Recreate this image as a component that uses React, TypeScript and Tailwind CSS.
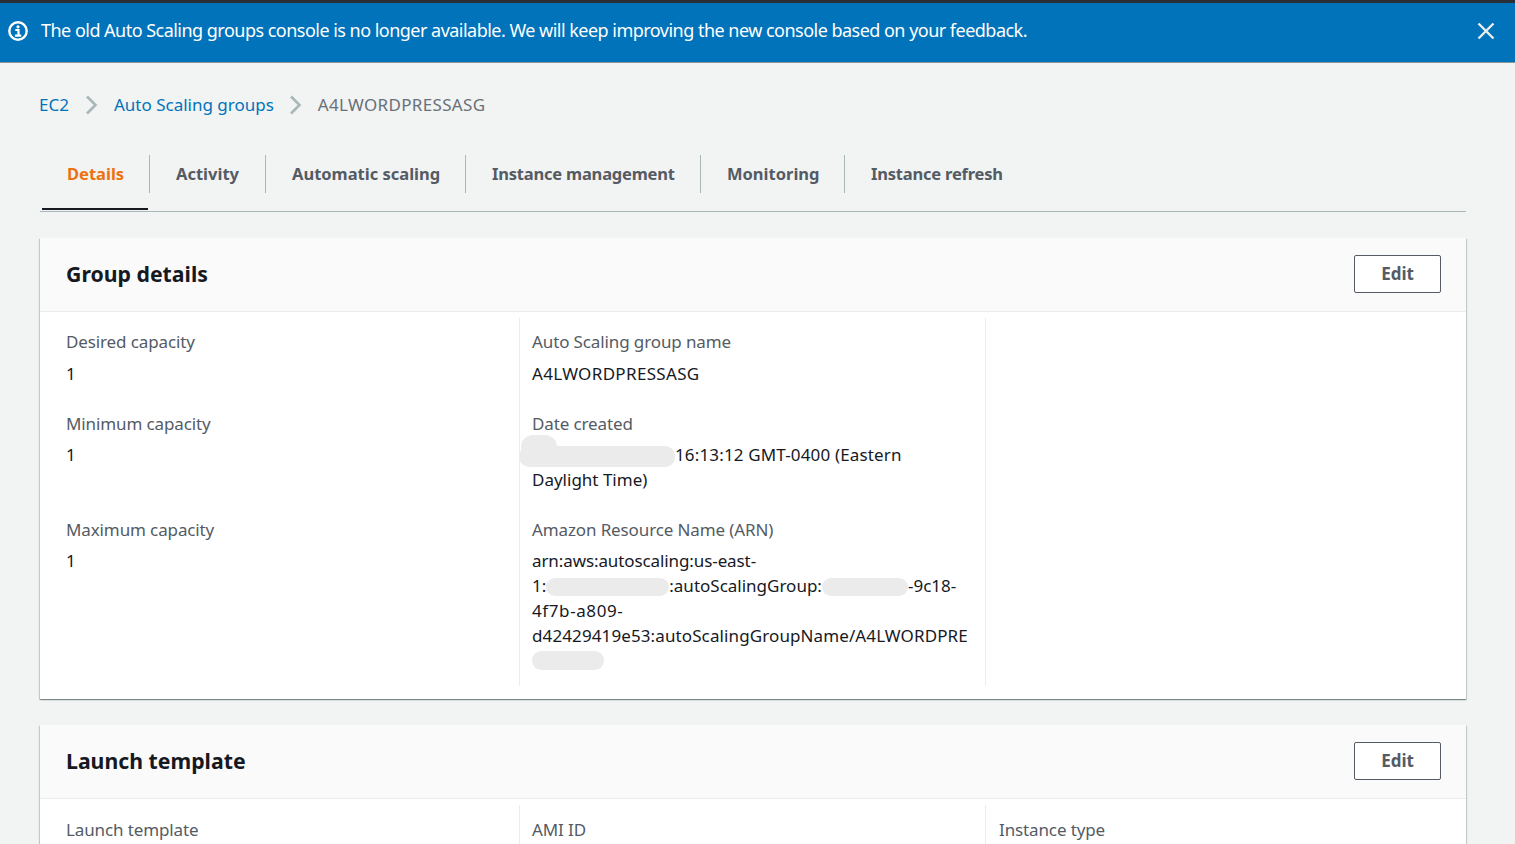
import React from 'react';

const font = { fontFamily: '"Noto Sans", sans-serif' };

const tabs = [
  { label: 'Details', cls: 'w-[108px] pl-[25px] text-[#ec7211] border-r' },
  { label: 'Activity', cls: 'w-[116px] pl-[26px] text-[#545b64] border-r' },
  { label: 'Automatic scaling', cls: 'w-[200px] pl-[26px] text-[#545b64] border-r' },
  { label: 'Instance management', cls: 'w-[235px] pl-[26px] text-[#545b64] border-r tracking-[-0.2px]' },
  { label: 'Monitoring', cls: 'w-[144px] pl-[26px] text-[#545b64] border-r' },
  { label: 'Instance refresh', cls: 'pl-[26px] text-[#545b64] tracking-[-0.2px]' },
];

// grey smudge that hides a redacted part of a value
const Blob = ({ className, children }: { className: string; children?: React.ReactNode }) => (
  <span className={`inline-block relative align-middle ${className}`}>
    <span className="absolute inset-0 rounded-full bg-[#ebebeb]" />
    {children}
  </span>
);

const Field = ({ label, children, className = '', gap = 'mt-[6px]' }: { label: string; children?: React.ReactNode; className?: string; gap?: string }) => (
  <div className={className}>
    <div className="text-[#545b64] leading-[25px] tracking-[-0.12px]">{label}</div>
    <div className={`${gap} text-[#16191f] leading-[25px]`}>{children}</div>
  </div>
);

const CardHeader = ({ title }: { title: string }) => (
  <div className="h-[74px] flex items-center justify-between pl-[26px] pr-[25px] pb-[1px] bg-[#fafafa] border-b border-[#eaeded]">
    <h2 className="text-[21.25px] font-bold text-[#16191f]">{title}</h2>
    <button className="w-[87px] h-[38px] bg-white border border-[#545b64] rounded-[2px] font-bold text-[#545b64] text-[17px]">Edit</button>
  </div>
);

const Chevron = ({ className }: { className: string }) => (
  <svg width="14" height="20" viewBox="0 0 14 20" fill="none" className={className}>
    <path d="M2 1.5l8.5 8.5L2 18.5" stroke="#aab7b8" strokeWidth="2.6" />
  </svg>
);

const cardShadow = 'shadow-[0_1px_1px_0_rgba(0,28,36,0.3),1px_1px_1px_0_rgba(0,28,36,0.15),-1px_1px_1px_0_rgba(0,28,36,0.15)]';

export default function App() {
  return (
    <div className="h-[844px] overflow-hidden bg-[#f2f3f3] text-[17px]" style={font}>
      <div className="h-[3px] bg-[#2a2e37]" />
      <div className="h-[60px] bg-[#0073bb] border-b border-[#879596] flex items-center pl-[8px] pr-[20px] pb-[4px] text-white text-[18px]">
        <svg width="20" height="20" viewBox="0 0 20 20" fill="none" className="shrink-0">
          <circle cx="10" cy="10" r="8.7" stroke="white" strokeWidth="2.4" />
          <circle cx="10" cy="5.8" r="1.6" fill="white" />
          <path d="M7.3 9h3.2v5M7 14.6h6.2" stroke="white" strokeWidth="2.2" />
        </svg>
        <span className="ml-[13px] flex-1 tracking-[-0.52px]">The old Auto Scaling groups console is no longer available. We will keep improving the new console based on your feedback.</span>
        <svg width="18" height="18" viewBox="0 0 18 18" fill="none" className="shrink-0">
          <path d="M1.5 1.5l15 15M16.5 1.5l-15 15" stroke="#eaeded" strokeWidth="2.4" />
        </svg>
      </div>

      <div className="pl-[40px] pr-[49px]">
        <div className="h-[84px] flex items-center">
          <span className="text-[#0073bb] -ml-[1px]">EC2</span>
          <Chevron className="ml-[16px] mr-[15px]" />
          <span className="text-[#0073bb]">Auto Scaling groups</span>
          <Chevron className="mx-[15px]" />
          <span className="text-[#687078] tracking-[0.33px]">A4LWORDPRESSASG</span>
        </div>

        <div className="h-[65px] flex border-b border-[#aab7b8] pl-[2px] text-[16.5px]">
          {tabs.map((t, i) => (
            <div key={t.label} className={`relative h-[38px] mt-[8px] flex items-center font-bold border-[#aab7b8] ${t.cls}`}>
              {t.label}
              {i === 0 && <span className="absolute left-0 right-[1px] top-[53px] h-[2px] bg-[#16191f]" />}
            </div>
          ))}
        </div>

        <div className={`mt-[26px] bg-white h-[461px] ${cardShadow}`}>
          <CardHeader title="Group details" />
          <div className="grid grid-cols-[480px_466px_1fr] pt-[6px]">
            <div className="h-[368px] border-r border-[#eaeded] pl-[26px] pt-[11px]">
              <Field label="Desired capacity" gap="mt-[7px]">1</Field>
              <Field label="Minimum capacity" className="mt-[25px]">1</Field>
              <Field label="Maximum capacity" className="mt-[50px]">1</Field>
            </div>
            <div className="h-[368px] border-r border-[#eaeded] pl-[12px] pt-[11px]">
              <Field label="Auto Scaling group name" gap="mt-[7px]"><span className="tracking-[0.33px]">A4LWORDPRESSASG</span></Field>
              <Field label="Date created" className="mt-[25px]">
                <Blob className="w-[143px] h-[21px]">
                  <span className="absolute -left-[13px] right-0 inset-y-0 rounded-full bg-[#ebebeb]" />
                  <span className="absolute -left-[11px] -top-[11px] w-[36px] h-[24px] rounded-full bg-[#ebebeb]" />
                </Blob>
                <span className="tracking-[0.15px]">16:13:12 GMT-0400 (Eastern</span><br />Daylight Time)
              </Field>
              <Field label="Amazon Resource Name (ARN)" className="mt-[25px]">
                <span className="tracking-[-0.1px]">arn:aws:autoscaling:us-east-</span><br />
                1:<Blob className="w-[123px] h-[18px]" />:autoScalingGroup:<Blob className="w-[86px] h-[18px]" />-9c18-<br />
                <span className="tracking-[0.6px]">4f7b-a809-</span><br />
                <span className="tracking-[0.11px]">d42429419e53:autoScalingGroupName/A4LWORDPRE</span><br />
                <Blob className="w-[72px] h-[19px] -translate-y-[2px]" />
              </Field>
            </div>
            <div />
          </div>
        </div>

        <div className={`mt-[26px] bg-white ${cardShadow}`}>
          <CardHeader title="Launch template" />
          <div className="grid grid-cols-[480px_466px_1fr] pt-[6px] text-[#545b64] tracking-[-0.12px]">
            <div className="h-[100px] border-r border-[#eaeded] pl-[26px] pt-[12px]">Launch template</div>
            <div className="h-[100px] border-r border-[#eaeded] pl-[12px] pt-[12px]">AMI ID</div>
            <div className="pl-[13px] pt-[12px]">Instance type</div>
          </div>
        </div>
      </div>
    </div>
  );
}
